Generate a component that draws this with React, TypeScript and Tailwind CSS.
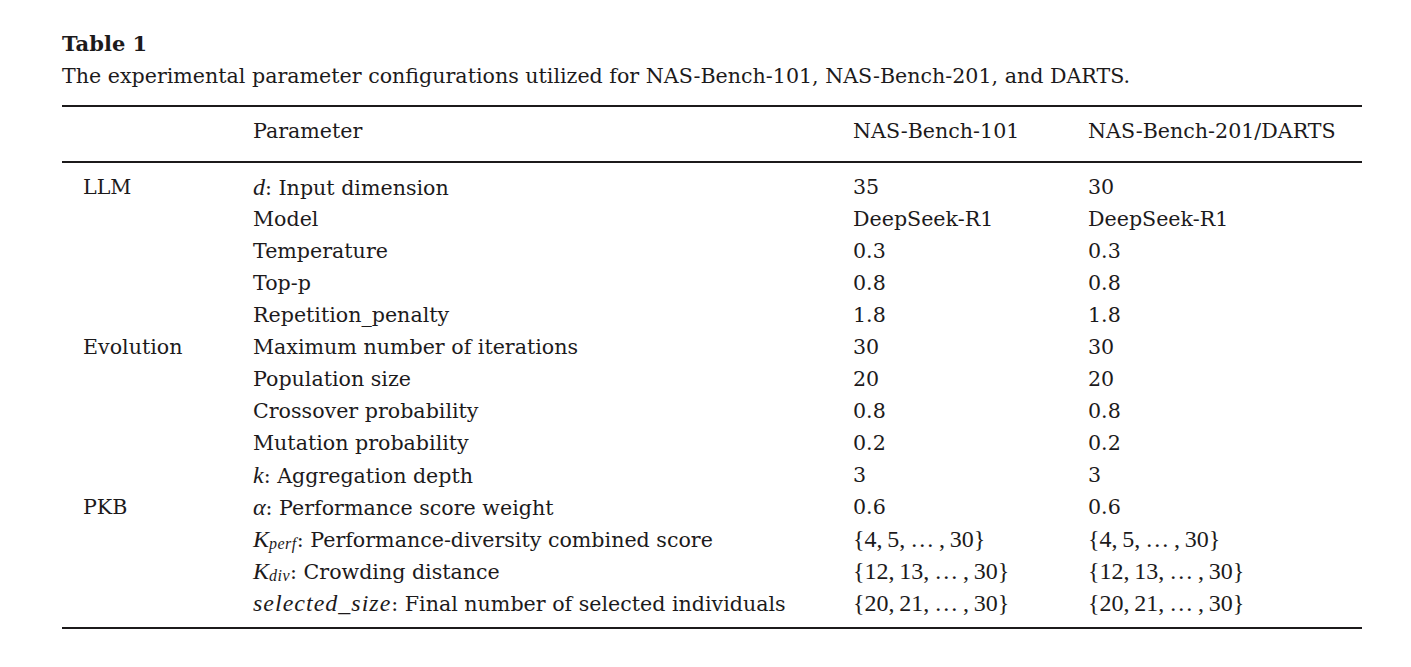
import React from 'react';

const serif = "font-['DejaVu_Serif',serif]";
const math = "font-['Liberation_Serif',serif]";

type Row = {
  group?: string;
  param: React.ReactNode;
  a: React.ReactNode;
  b: React.ReactNode;
};

function Set({ children }: { children: React.ReactNode }) {
  return <span className={`${math} text-[24px]`}>{children}</span>;
}

const rows: Row[] = [
  { group: 'LLM', param: <><i className={`${math} text-[24px]`}>d</i>: Input dimension</>, a: '35', b: '30' },
  { param: 'Model', a: 'DeepSeek-R1', b: 'DeepSeek-R1' },
  { param: 'Temperature', a: '0.3', b: '0.3' },
  { param: 'Top-p', a: '0.8', b: '0.8' },
  { param: 'Repetition_penalty', a: '1.8', b: '1.8' },
  { group: 'Evolution', param: 'Maximum number of iterations', a: '30', b: '30' },
  { param: 'Population size', a: '20', b: '20' },
  { param: 'Crossover probability', a: '0.8', b: '0.8' },
  { param: 'Mutation probability', a: '0.2', b: '0.2' },
  { param: <><i className={`${math} text-[24px]`}>k</i>: Aggregation depth</>, a: '3', b: '3' },
  { group: 'PKB', param: <><i className={`${math} text-[24px]`}>α</i>: Performance score weight</>, a: '0.6', b: '0.6' },
  {
    param: (
      <>
        <i className={`${math} text-[24px]`}>K</i>
        <sub className={`${math} italic text-[16px] tracking-[0.5px] relative top-[2px]`}>perf</sub>: Performance-diversity combined score
      </>
    ),
    a: <Set>{'{4,\u20095,\u2009…\u2009,\u200930}'}</Set>,
    b: <Set>{'{4,\u20095,\u2009…\u2009,\u200930}'}</Set>,
  },
  {
    param: (
      <>
        <i className={`${math} text-[24px]`}>K</i>
        <sub className={`${math} italic text-[16px] tracking-[0.5px] relative top-[2px]`}>div</sub>: Crowding distance
      </>
    ),
    a: <Set>{'{12,\u200913,\u2009…\u2009,\u200930}'}</Set>,
    b: <Set>{'{12,\u200913,\u2009…\u2009,\u200930}'}</Set>,
  },
  {
    param: (
      <>
        <i className={`${math} text-[24px] tracking-[1px]`}>selected_size</i>: Final number of selected individuals
      </>
    ),
    a: <Set>{'{20,\u200921,\u2009…\u2009,\u200930}'}</Set>,
    b: <Set>{'{20,\u200921,\u2009…\u2009,\u200930}'}</Set>,
  },
];

export default function App() {
  return (
    <div className={`min-h-screen bg-white text-[#1c1a1b] ${serif} text-[20.6px]`}>
      <div className="ml-[62px] w-[1300px] pt-[28px]">
        <div className="h-[32px] leading-[32px] font-bold text-[21px]">Table 1</div>
        <div className="h-[32px] leading-[32px]">
          The experimental parameter configurations utilized for NAS-Bench-101, NAS-Bench-201, and DARTS.
        </div>

        <div className="mt-[13px] border-t-2 border-[#1c1a1b]" />
        <div className="grid grid-cols-[170px_600px_235px_1fr] pl-[21px] pt-[8px] pb-[14px]">
          <div />
          <div className="h-[32px] leading-[32px]">Parameter</div>
          <div className="h-[32px] leading-[32px]">NAS-Bench-101</div>
          <div className="h-[32px] leading-[32px]">NAS-Bench-201/DARTS</div>
        </div>
        <div className="border-t-2 border-[#1c1a1b]" />

        <div className="py-[8px]">
          {rows.map((r, i) => (
            <div key={i} className="grid grid-cols-[170px_600px_235px_1fr] pl-[21px] h-[32px] leading-[32px] whitespace-nowrap">
              <div>{r.group}</div>
              <div>{r.param}</div>
              <div>{r.a}</div>
              <div>{r.b}</div>
            </div>
          ))}
        </div>
        <div className="border-t-2 border-[#1c1a1b]" />
      </div>
    </div>
  );
}
